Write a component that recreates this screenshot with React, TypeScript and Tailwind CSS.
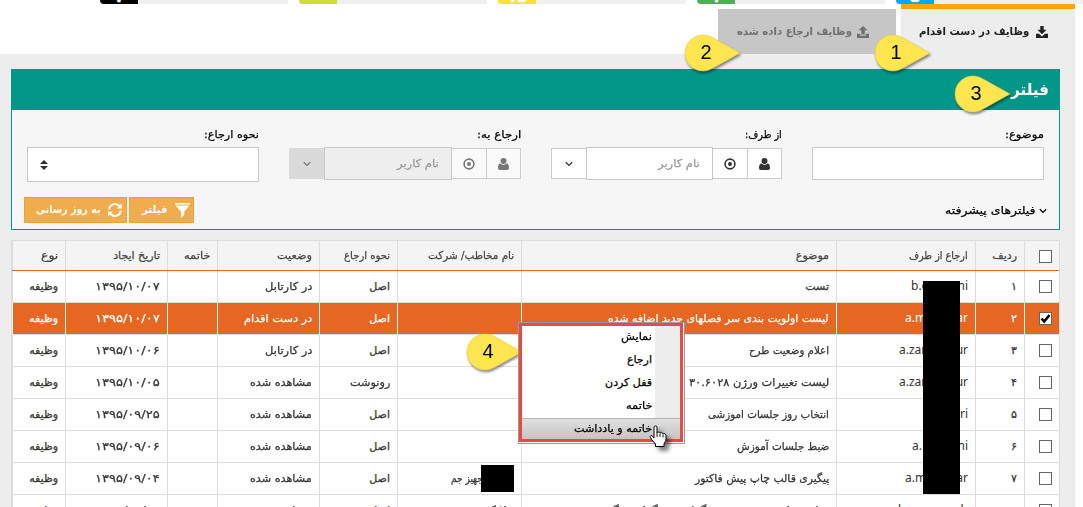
import React, { useLayoutEffect, useRef, useState } from "react";

/* A single line of text squeezed or stretched to a set width. */
function Fit({ w, children }: { w: number; children: React.ReactNode }) {
  const ref = useRef<HTMLSpanElement>(null);
  const [scale, setScale] = useState(1);
  useLayoutEffect(() => {
    if (ref.current && ref.current.offsetWidth) setScale(w / ref.current.offsetWidth);
  }, [w]);
  return (
    <span className="inline-flex shrink-0 justify-start whitespace-nowrap" style={{ width: w }}>
      <span ref={ref} className="inline-block shrink-0 origin-right" style={{ transform: `scaleX(${scale})` }}>
        {children}
      </span>
    </span>
  );
}

const DownloadIcon = () => (
  <svg width="12" height="12" viewBox="0 0 12 12" fill="currentColor" className="shrink-0">
    <path d="M4.300 0h3.400v3.800h2.800L6 8.200 1.500 3.800h2.800z" />
    <path d="M0 7.800h3L6 10.400 9 7.800h3V12H0z" />
  </svg>
);

const UploadIcon = () => (
  <svg width="12" height="12" viewBox="0 0 12 12" fill="currentColor" className="shrink-0">
    <path d="M6 0l4.500 4.300H7.700V8.500H4.300V4.300H1.500z" />
    <path d="M0 7.800h3.300v1.900h5.400V7.800H12V12H0z" />
  </svg>
);

const UserIcon = () => (
  <svg width="11" height="12" viewBox="0 0 11 12" fill="currentColor">
    <circle cx="5.500" cy="3" r="3" />
    <path d="M2.700 5.400C3.400 6.300 4.400 6.700 5.500 6.700S7.600 6.300 8.300 5.400C10.300 5.400 11 7.500 11 9.800 11 11.200 10.200 12 9 12H2C.8 12 0 11.200 0 9.800 0 7.500 .7 5.400 2.700 5.400z" />
  </svg>
);

const TargetIcon = () => (
  <svg width="12" height="12" viewBox="0 0 12 12">
    <circle cx="6" cy="6" r="4.900" fill="none" stroke="currentColor" strokeWidth="1.600" />
    <circle cx="6" cy="6" r="2" fill="currentColor" />
  </svg>
);

const Chevron = () => (
  <svg width="8" height="6" viewBox="0 0 8 6" className="shrink-0">
    <path d="M.8 1.200L4 4.400 7.200 1.200" fill="none" stroke="currentColor" strokeWidth="1.300" />
  </svg>
);

const FunnelIcon = () => (
  <svg width="15" height="15" viewBox="0 0 15 15" fill="currentColor" className="shrink-0">
    <path d="M0 0h15v1.600H0zM.5 2.400h14L9.300 8.500V12L6 15V8.500z" />
  </svg>
);

const RefreshIcon = () => (
  <svg width="14" height="14" viewBox="0 0 14 14" className="shrink-0">
    <path d="M1.200 6.300A5.800 5.800 0 0 1 11.300 3M12.800 7.700A5.800 5.800 0 0 1 2.700 11" fill="none" stroke="currentColor" strokeWidth="2" />
    <path d="M13.800.6V5.500H8.900zM.2 13.400V8.500H5.100z" fill="currentColor" />
  </svg>
);

function Callout({ n }: { n: string }) {
  return (
    <svg width="62" height="44" viewBox="0 0 62 44" className="overflow-visible drop-shadow-[1px_2px_1px_rgba(0,0,0,0.45)]">
      <path d="M59 20 L33 34.500 C28.500 37 25.500 38 22 38 A18 18 0 1 1 22 2 C26 2 30 3.700 33 5.500 Z" fill="#ffe54f" stroke="#e9cf45" strokeWidth=".6" />
      <text x="25" y="25.500" textAnchor="middle" fontSize="20" fontFamily="Liberation Sans, sans-serif" fill="#000">
        {n}
      </text>
    </svg>
  );
}

function Check({ on }: { on?: boolean }) {
  return (
    <span className="flex size-[13px] items-center justify-center border border-[#666] bg-white">
      {on && (
        <svg width="11" height="11" viewBox="0 0 11 11">
          <path d="M1.500 5.500 L4.200 8.500 L9.500 2" fill="none" stroke="#000" strokeWidth="2.600" />
        </svg>
      )}
    </span>
  );
}

const COLS = "grid grid-cols-[35px_49px_139px_315px_124px_78px_102px_50px_102px_53px]";

type Txt = [string, number];
type Row = { n: string; from: [string, string, number]; subject: Txt; to?: Txt; kind: Txt; state: Txt; date: string; on?: boolean };

const ASL: Txt = ["اصل", 21];
const INBOX: Txt = ["در کارتابل", 47];
const SEEN: Txt = ["مشاهده شده", 62];

const rows: Row[] = [
  { n: "۱", from: ["b.e", "ni", 57], subject: ["تست", 24], kind: ASL, state: INBOX, date: "۱۳۹۵/۱۰/۰۷" },
  { n: "۲", from: ["a.m", "ar", 63], subject: ["لیست اولویت بندی سر فصلهای جدید اضافه شده", 221], kind: ASL, state: ["در دست اقدام", 68], date: "۱۳۹۵/۱۰/۰۷", on: true },
  { n: "۳", from: ["a.zan", "ur", 69], subject: ["اعلام وضعیت طرح", 80], kind: ASL, state: INBOX, date: "۱۳۹۵/۱۰/۰۶" },
  { n: "۴", from: ["a.zan", "ur", 69], subject: ["لیست تغییرات ورژن ۳۰.۶۰۲۸", 140], kind: ["رونوشت", 40], state: SEEN, date: "۱۳۹۵/۱۰/۰۵" },
  { n: "۵", from: ["", "ari", 57], subject: ["انتخاب روز جلسات اموزشی", 121], kind: ASL, state: SEEN, date: "۱۳۹۵/۰۹/۲۵" },
  { n: "۶", from: ["a.", "ni", 56], subject: ["ضبط جلسات آموزش", 92], kind: ASL, state: SEEN, date: "۱۳۹۵/۰۹/۰۶" },
  { n: "۷", from: ["a.m", "ar", 63], subject: ["پیگیری قالب چاپ پیش فاکتور", 134], to: ["شرکت تجهیز جم", 63], kind: ASL, state: SEEN, date: "۱۳۹۵/۰۹/۰۴" },
  { n: "۸", from: ["h.mo", "h", 70], subject: ["نمایش تاریخ در فرم ثبت گزارش و گزارش گیری", 235], to: ["ملائک", 30], kind: ASL, state: SEEN, date: "۱۳۹۵/۰۹/۰۴" },
];

const heads: Txt[] = [
  ["ردیف", 25], ["ارجاع از طرف", 59], ["موضوع", 33], ["نام مخاطب/ شرکت", 86], ["نحوه ارجاع", 46],
  ["وضعیت", 35], ["خاتمه", 26], ["تاریخ ایجاد", 47], ["نوع", 17],
];

function Cell({ t, on }: { t?: Txt; on?: boolean }) {
  return (
    <div className={"flex items-center border-l pr-[7px] " + (on ? "border-white" : "border-[#dcdcdc]")}>
      {t && <Fit w={t[1]}>{t[0]}</Fit>}
    </div>
  );
}

function TableRow({ r }: { r: Row }) {
  return (
    <div className={COLS + " h-8 shrink-0 border-b border-[#dcdcdc] " + (r.on ? "bg-[#e66722] text-white" : "bg-white text-[#333]")}>
      <div className={"flex items-center border-l pr-[7px] " + (r.on ? "border-white" : "border-[#dcdcdc]")}>
        <Check on={r.on} />
      </div>
      <Cell t={[r.n, 6]} on={r.on} />
      <div className={"flex items-center border-l pr-[7px] pb-0.5 " + (r.on ? "border-white" : "border-[#dcdcdc]")}>
        <div dir="ltr" className="flex justify-between font-['Noto_Sans',sans-serif] text-[12px] [-webkit-text-stroke:0]" style={{ width: r.from[2] }}>
          <span>{r.from[0]}</span>
          <span>{r.from[1]}</span>
        </div>
      </div>
      <Cell t={r.subject} on={r.on} />
      <Cell t={r.to} on={r.on} />
      <Cell t={r.kind} on={r.on} />
      <Cell t={r.state} on={r.on} />
      <Cell on={r.on} />
      <Cell t={[r.date, 65]} on={r.on} />
      <Cell t={["وظیفه", 29]} on={r.on} />
    </div>
  );
}

function UserPicker({ label, w, off }: { label: string; w: number; off?: boolean }) {
  const btn = "flex h-[31px] items-center justify-center border border-[#ccc] ";
  return (
    <div className={"flex flex-col " + (off ? "w-[232px]" : "w-[231px]")}>
      <div className="flex h-[23px] items-center pb-0.5">
        <Fit w={w}>{label}</Fit>
      </div>
      <div className={"flex h-[33px] items-center " + (off ? "text-[#777]" : "text-[#333]")}>
        <span className={btn + "w-[35px] " + (off ? "bg-[#fafafa]" : "bg-white")}><UserIcon /></span>
        <span className={btn + "w-[34px] border-x-0 " + (off ? "bg-[#fafafa]" : "bg-white")}><TargetIcon /></span>
        <span className={"flex h-[33px] flex-1 items-center border border-[#c8c8c8] pr-3 text-[#999] " + (off ? "bg-[#eee]" : "bg-white")}>
          <Fit w={42}>نام کاربر</Fit>
        </span>
        <span className={"flex h-[31px] w-[35px] items-center justify-center border border-r-0 " + (off ? "border-[#dadada] bg-[#dadada]" : "border-[#ccc] bg-white")}>
          <Chevron />
        </span>
      </div>
    </div>
  );
}

const menu: Txt[] = [["نمایش", 31], ["ارجاع", 25], ["قفل کردن", 47], ["خاتمه", 26], ["خاتمه و یادداشت", 78]];

const stats = [
  { c: "bg-black", d: "۷" },
  { c: "bg-[#cddc39]", d: "۰" },
  { c: "bg-[#ffe135]", d: "۱۵" },
  { c: "bg-[#4caf50]", d: "۱" },
  { c: "bg-[#03a9f4]", d: "۵" },
];

export default function App() {
  return (
    <div dir="rtl" className="relative flex h-[507px] w-[1083px] flex-col overflow-hidden bg-white font-['DejaVu_Sans','Noto_Sans',sans-serif] text-[11px] leading-4 text-black [-webkit-text-stroke:0.25px]">
      <div dir="ltr" className="flex h-1 shrink-0 gap-[11px] overflow-hidden pl-[100px]">
        {stats.map((s) => (
          <div key={s.c} className="flex w-[188px] shrink-0 items-end bg-[#f0f0f0]">
            <span className={"flex h-3 w-[38px] shrink-0 items-end justify-center overflow-hidden rounded-bl-[4px] text-[16px] font-bold leading-[15px] text-white " + s.c}>{s.d}</span>
          </div>
        ))}
      </div>

      <div className="flex h-[50px] shrink-0 gap-[5px] pr-2">
        <div className="flex w-[174px] items-center gap-[7px] border-t-[5px] border-[#ffa500] bg-[#ededed] pr-[27px] font-bold text-[#222] [-webkit-text-stroke:0]">
          <DownloadIcon />
          <Fit w={110}>وظایف در دست اقدام</Fit>
        </div>
        <div className="mt-[5px] flex w-[178px] items-center gap-[5px] bg-[#c6c6c6] pr-[27px] font-bold text-[#707070] [-webkit-text-stroke:0]">
          <UploadIcon />
          <Fit w={115}>وظایف ارجاع داده شده</Fit>
        </div>
      </div>

      <div className="mr-2 flex flex-1 flex-col bg-[#ededed] pt-[15px] pr-[15px] pl-[11px]">
        <section className="flex h-[161px] shrink-0 flex-col border border-[#009688] bg-[#f6f6f6]">
          <div className="flex h-10 items-center bg-[#009688] pr-2.5 text-[16px] font-bold text-white [-webkit-text-stroke:0]">
            <Fit w={38}>فیلتر</Fit>
          </div>
          <div className="flex justify-between pt-[14px] pr-[15px] pl-[15px]">
            <div className="flex w-[232px] flex-col">
              <div className="flex h-[23px] items-center pb-0.5"><Fit w={39}>موضوع:</Fit></div>
              <div className="h-[33px] border border-[#c8c8c8] bg-white" />
            </div>
            <UserPicker label="از طرف:" w={37} />
            <UserPicker label="ارجاع به:" w={44} off />
            <div className="flex w-[232px] flex-col">
              <div className="flex h-[23px] items-center pb-0.5"><Fit w={55}>نحوه ارجاع:</Fit></div>
              <div className="flex h-[35px] items-center justify-end border border-[#c8c8c8] bg-white pl-[12px] text-[#333]">
                <svg width="8" height="10" viewBox="0 0 8 10" fill="currentColor"><path d="M4 0 8 4H0zM4 10 8 6H0z" /></svg>
              </div>
            </div>
          </div>
          <div className="mt-[15px] flex items-center justify-between pr-3 pl-3">
            <div className="flex items-center gap-[3px] pt-0.5">
              <Chevron />
              <Fit w={91}>فیلترهای پیشرفته</Fit>
            </div>
            <div className="flex gap-[2px] text-white [-webkit-text-stroke:0]">
              <div className="flex h-[26px] w-[65px] items-center gap-[7px] border border-[#eea236] bg-[#f0ad4e] pr-[3px] font-bold">
                <FunnelIcon />
                <Fit w={26}>فیلتر</Fit>
              </div>
              <div className="flex h-[26px] w-[103px] items-center gap-[7px] border border-[#eea236] bg-[#f0ad4e] pr-[4px] font-bold">
                <RefreshIcon />
                <Fit w={65}>به روز رسانی</Fit>
              </div>
            </div>
          </div>
        </section>

        <div className="mt-2.5 flex h-[267px] flex-col overflow-hidden border-x border-t border-[#dcdcdc] bg-white">
          <div className={COLS + " h-[30px] shrink-0 border-b border-b-[#e2661f] bg-[#f4f4f4] text-[#444]"}>
            <div className="flex items-center border-l border-[#dcdcdc] pt-px pr-[7px]"><Check /></div>
            {heads.map((h) => <Cell key={h[0]} t={h} />)}
          </div>
          {rows.map((r) => <TableRow key={r.n} r={r} />)}
        </div>
      </div>

      <div className="absolute left-[923px] top-[281px] h-[213px] w-[37px] bg-black" />
      <div className="absolute left-[481px] top-[465px] h-[27px] w-[33px] bg-black" />

      <div className="absolute left-[871px] top-[33px]"><Callout n="1" /></div>
      <div className="absolute left-[681px] top-[33px]"><Callout n="2" /></div>
      <div className="absolute left-[951px] top-[74px]"><Callout n="3" /></div>
      <div className="absolute left-[463px] top-[332px]"><Callout n="4" /></div>

      <div className="absolute left-[518px] top-[322px] h-[122px] w-[167px] border border-[#999] bg-white pr-px pb-px">
        <div className="flex h-full flex-col border-[3px] border-[#e94b43] bg-white">
          {menu.map(([t, w], i) =>
            i < 4 ? (
              <div key={t} className="flex h-[23px] items-center border-r-[25px] border-[#ededed] pr-[3px] pb-0.5">
                <Fit w={w}>{t}</Fit>
              </div>
            ) : (
              <div key={t} className="flex flex-1 items-center border-t border-[#b5b5b5] bg-linear-to-b from-[#e0e0e0] to-[#c4c4c4] pr-7">
                <Fit w={w}>{t}</Fit>
              </div>
            )
          )}
        </div>
      </div>

      <svg className="absolute left-[649px] top-[425px] drop-shadow-[4px_4px_2px_rgba(0,0,0,0.5)]" width="19" height="23" viewBox="0 0 19 23">
        <path d="M5 2C5 .7 8 .7 8 2V8C8 6.800 11 6.800 11 8.200 11.300 7.200 14 7.400 14 9 14.500 8.200 17 8.500 17 10.500V14C17 16 15.500 17.500 15 19V21.500H6.500V19C5 17 3 15.500 1.500 12.500 .5 10.500 2.500 10 3.500 11.200L5 13Z" fill="#fff" stroke="#000" strokeWidth="1" />
        <path d="M8 8V12M11 8.500V12M14 9.500V12.500" stroke="#000" strokeWidth=".9" />
      </svg>
    </div>
  );
}
